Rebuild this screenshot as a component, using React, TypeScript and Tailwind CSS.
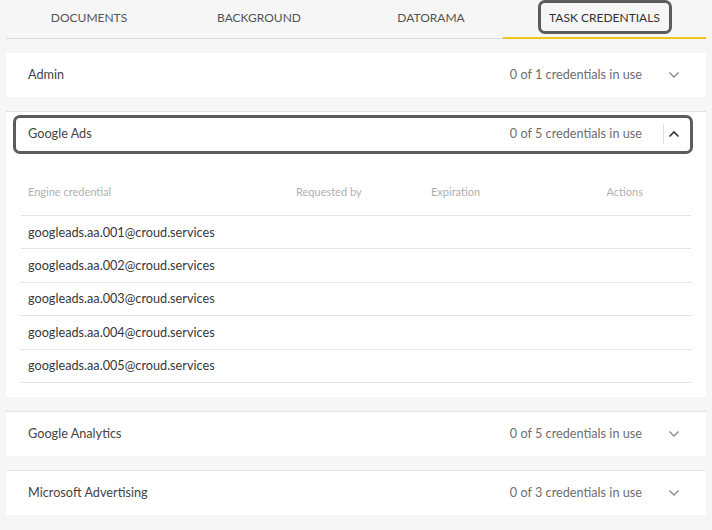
import React from "react";

const font = { fontFamily: "Lato, 'Noto Sans', sans-serif" };

function Chevron({ up }: { up?: boolean }) {
  return (
    <svg width="12" height="8" viewBox="0 0 12 8" className="block">
      {up ? (
        <path d="M1.5 6.5 L6 2 L10.5 6.5" fill="none" stroke="#333" strokeWidth="1.6" />
      ) : (
        <path d="M1.5 1.5 L6 6 L10.5 1.5" fill="none" stroke="#8a8a8a" strokeWidth="1.4" />
      )}
    </svg>
  );
}

function Header({ title, count, open }: { title: string; count: string; open?: boolean }) {
  return (
    <div className="relative flex h-[44px] items-center pl-[22px] pr-[26px]">
      <div className="flex-1 text-[12.7px] text-[#444]">{title}</div>
      <div className="text-[12.7px] text-[#6e6e6e]">{count}</div>
      <div className="relative ml-[26px] flex w-[12px] justify-center">
        {open && <div className="absolute left-[-5px] top-[-6px] h-[20px] w-px bg-[#d3e3f5]" />}
        <Chevron up={open} />
      </div>
      {open && (
        <div className="pointer-events-none absolute left-[7px] right-[13px] top-[3px] bottom-[2px] rounded-[7px] border-[3px] border-[#5c5c5c]" />
      )}
    </div>
  );
}

const creds = [
  "googleads.aa.001@croud.services",
  "googleads.aa.002@croud.services",
  "googleads.aa.003@croud.services",
  "googleads.aa.004@croud.services",
  "googleads.aa.005@croud.services",
];

export default function App() {
  return (
    <div className="h-[530px] w-[712px] overflow-hidden bg-[#f6f6f6] px-[6px]" style={font}>
      {/* Tabs */}
      <div className="relative flex h-[39px] border-b border-[#dcdcdc] text-[12px] uppercase text-[#555]">
        <div className="flex w-[166px] items-center justify-center pb-[2px]">Documents</div>
        <div className="ml-[2px] flex w-[170px] items-center justify-center pb-[2px]">Background</div>
        <div className="ml-[17px] flex w-[140px] items-center justify-center pb-[2px]">Datorama</div>
        <div className="relative ml-[2px] flex w-[203px] items-center justify-center pb-[2px] text-[#333]">
          Task Credentials
          <div className="absolute bottom-[-1px] left-0 right-0 h-[2px] bg-[#f2c417]" />
          <div className="pointer-events-none absolute left-[35px] top-0 h-[34px] w-[134px] rounded-[7px] border-[3px] border-[#5c5c5c]" />
        </div>
      </div>

      {/* Admin */}
      <div className="mt-[14px] bg-white">
        <Header title="Admin" count="0 of 1 credentials in use" />
      </div>

      {/* Google Ads */}
      <div className="mt-[14px] border-t border-[#e2e2e2] bg-white">
        <Header title="Google Ads" count="0 of 5 credentials in use" open />
        <div className="px-[15px] pb-[14px] pt-[14px]">
          <div className="flex h-[46px] items-center border-b border-[#e4e4e4] pl-[7px] pr-[48px] text-[11px] text-[#b0b0b0]">
            <div className="w-[268px]">Engine credential</div>
            <div className="w-[135px]">Requested by</div>
            <div className="flex-1">Expiration</div>
            <div>Actions</div>
          </div>
          {creds.map((c) => (
            <div
              key={c}
              className="flex h-[33.4px] items-center border-b border-[#e4e4e4] pl-[7px] text-[12.7px] text-[#383838]"
            >
              {c}
            </div>
          ))}
        </div>
      </div>

      {/* Google Analytics */}
      <div className="mt-[14px] border-t border-[#e2e2e2] bg-white">
        <Header title="Google Analytics" count="0 of 5 credentials in use" />
      </div>

      {/* Microsoft Advertising */}
      <div className="mt-[14px] border-t border-[#e2e2e2] bg-white">
        <Header title="Microsoft Advertising" count="0 of 3 credentials in use" />
      </div>
    </div>
  );
}
